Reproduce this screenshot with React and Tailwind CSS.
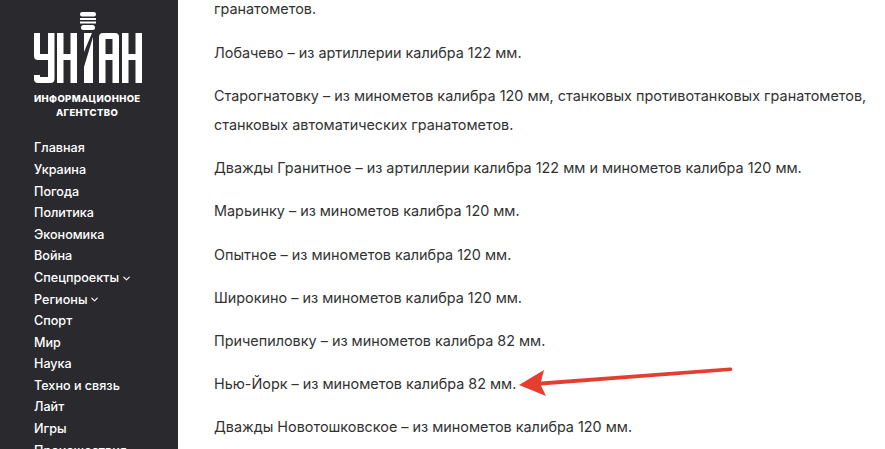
import { ChevronDown } from 'lucide-react';

const navItems = [
  { label: 'Главная' },
  { label: 'Украина' },
  { label: 'Погода' },
  { label: 'Политика' },
  { label: 'Экономика' },
  { label: 'Война' },
  { label: 'Спецпроекты', more: true },
  { label: 'Регионы', more: true },
  { label: 'Спорт' },
  { label: 'Мир' },
  { label: 'Наука' },
  { label: 'Техно и связь' },
  { label: 'Лайт' },
  { label: 'Игры' },
  { label: 'Происшествия' },
];

const paragraphs = [
  'Лобачево – из артиллерии калибра 122 мм.',
  'Старогнатовку – из минометов калибра 120 мм, станковых противотанковых гранатометов, станковых автоматических гранатометов.',
  'Дважды Гранитное – из артиллерии калибра 122 мм и минометов калибра 120 мм.',
  'Марьинку – из минометов калибра 120 мм.',
  'Опытное – из минометов калибра 120 мм.',
  'Широкино – из минометов калибра 120 мм.',
  'Причепиловку – из минометов калибра 82 мм.',
  'Нью-Йорк – из минометов калибра 82 мм.',
  'Дважды Новотошковское – из минометов калибра 120 мм.',
];

// svg origin = page (34, 12)
const Logo = () => (
  <svg width="108" height="72" viewBox="0 0 108 72" className="block" fill="#fff">
    <rect x="46" y="0" width="16" height="4.5" rx="2.2" />
    <rect x="46" y="6" width="16" height="2" />
    <rect x="46" y="9.5" width="16" height="2" />
    <rect x="47" y="13" width="14" height="5" rx="2.5" />
    <path d="M0 21.5a.5.5 0 0 1 .5-.5h5.5v21h8V21h6.500v46a4 4 0 0 1-4 4H4a4 4 0 0 1-4-4v-4h6v2h8V48H4a4 4 0 0 1-4-4z" />
    <path d="M23 21h6.500v21h7V21H43v50h-6.500V48h-7v23H23z" />
    <path d="M50 21h8l-8 19zM59 25v46h-9V55z" />
    <path d="M65 25a4 4 0 0 1 4-4h12a4 4 0 0 1 4 4v46h-6.500V48h-7v23H65zM71.500 27v15h7V27z" fillRule="evenodd" />
    <path d="M88 21h6.500v21h7V21h6.500v50h-6.500V48h-7v23H88z" />
  </svg>
);

export default function App() {
  return (
    <div className="relative flex h-[449px] w-[885px] overflow-hidden bg-white font-['Inter',sans-serif]">
      <aside className="w-[178px] shrink-0 overflow-hidden bg-[#2a292e] pl-[34px] pt-[12px]">
        <Logo />
        <div className="mt-[8px] w-[106px] text-center text-[9.5px] font-extrabold uppercase leading-[14px] tracking-[0.35px] text-white">
          <div>Информационное</div>
          <div>агентство</div>
        </div>
        <nav className="mt-[18px] flex flex-col">
          {navItems.map((item) => (
            <a key={item.label} className="flex h-[21.6px] items-center text-[12.6px] font-medium text-white">
              {item.label}
              {item.more && <ChevronDown size={11} strokeWidth={2.5} className="ml-[2px]" />}
            </a>
          ))}
        </nav>
      </aside>
      <main className="flex-1 overflow-hidden pl-[36px] pr-[12px] text-[14.4px] leading-[29px] text-[#323232]">
        <p className="-mt-[6px] mb-[15px]">гранатометов.</p>
        {paragraphs.map((text) => (
          <p key={text} className="mb-[14.15px]">{text}</p>
        ))}
      </main>
      <svg className="absolute left-[515px] top-[360px]" width="225" height="45" viewBox="0 0 225 45">
        <path d="M4 25 L29 10 L26 21.500 L215 7.500 A1.600 1.600 0 0 1 216 11 L26 25.500 L31 36 Z" fill="#e53e30" />
      </svg>
    </div>
  );
}
